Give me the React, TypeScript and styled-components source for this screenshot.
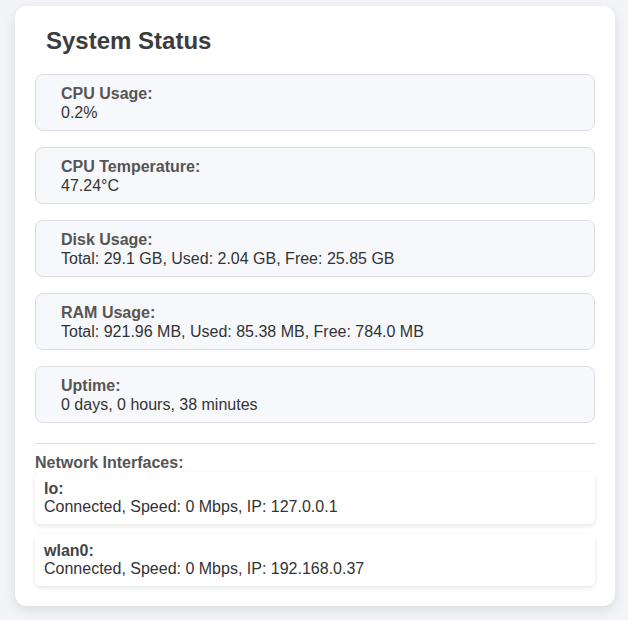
import React from "react";
import styled, { createGlobalStyle } from "styled-components";

const Global = createGlobalStyle`
  html, body { margin: 0; padding: 0; background: #f3f4f8; }
  body { font-family: "Liberation Sans", Arial, sans-serif; }
`;

const Page = styled.div`
  padding: 6px 13px 14px 15px;
`;

const Card = styled.div`
  width: 560px;
  padding: 20px;
  background: #ffffff;
  border-radius: 12px;
  box-shadow: 0 4px 12px rgba(0, 0, 0, 0.1);
`;

const Title = styled.h2`
  margin: 1px 0 19px 11px;
  font-size: 24px;
  line-height: 28px;
  font-weight: bold;
  color: #3c3c3c;
`;

const Stats = styled.div`
  display: flex;
  flex-direction: column;
  gap: 16px;
`;

const StatItem = styled.div`
  padding: 10px 25px 8px;
  background: #f7f8fc;
  border: 1px solid #dcdde2;
  border-radius: 8px;
  font-size: 16px;
  line-height: 18.5px;
`;

const Label = styled.div`
  font-weight: bold;
  color: #555555;
`;

const Value = styled.div`
  color: #333333;
`;

const Divider = styled.hr`
  margin: 20px 0 10px;
  border: none;
  border-top: 1px solid #dcdcdc;
`;

const NetTitle = styled.div`
  font-size: 16px;
  line-height: 18px;
  font-weight: bold;
  color: #555555;
`;

const NetList = styled.div`
  display: flex;
  flex-direction: column;
  gap: 10px;
`;

const NetCard = styled.div`
  padding: 8px 9px;
  background: #ffffff;
  border-radius: 6px;
  box-shadow: 0 2px 5px rgba(0, 0, 0, 0.1);
  font-size: 16px;
  line-height: 18px;
`;

const NetName = styled.div`
  font-weight: bold;
  color: #444444;
`;

const stats = [
  ["CPU Usage:", "0.2%"],
  ["CPU Temperature:", "47.24°C"],
  ["Disk Usage:", "Total: 29.1 GB, Used: 2.04 GB, Free: 25.85 GB"],
  ["RAM Usage:", "Total: 921.96 MB, Used: 85.38 MB, Free: 784.0 MB"],
  ["Uptime:", "0 days, 0 hours, 38 minutes"],
];

const nets = [
  ["lo:", "Connected, Speed: 0 Mbps, IP: 127.0.0.1"],
  ["wlan0:", "Connected, Speed: 0 Mbps, IP: 192.168.0.37"],
];

export default function App() {
  return (
    <>
      <Global />
      <Page>
        <Card>
          <Title>System Status</Title>
          <Stats>
            {stats.map(([l, v]) => (
              <StatItem key={l}>
                <Label>{l}</Label>
                <Value>{v}</Value>
              </StatItem>
            ))}
          </Stats>
          <Divider />
          <NetTitle>Network Interfaces:</NetTitle>
          <NetList>
            {nets.map(([n, v]) => (
              <NetCard key={n}>
                <NetName>{n}</NetName>
                <Value>{v}</Value>
              </NetCard>
            ))}
          </NetList>
        </Card>
      </Page>
    </>
  );
}
